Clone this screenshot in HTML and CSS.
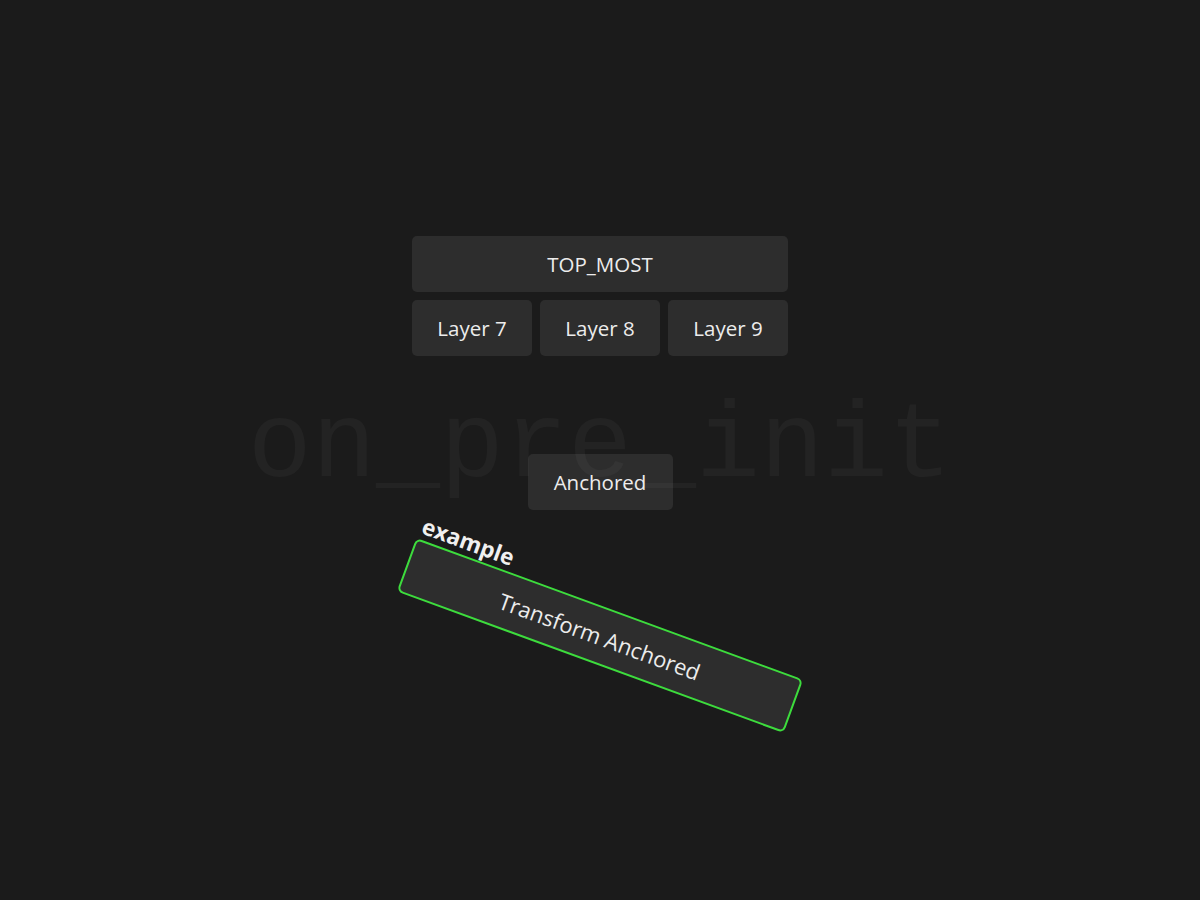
FILE: index.html
```html
<!DOCTYPE html>
<html>
<head>
<meta charset="utf-8">
<title>Layers</title>
<link rel="stylesheet" href="styles.css">
</head>
<body>
<main class="stage">
  <section class="layers">
    <button class="btn wide">TOP_MOST</button>
    <div class="row">
      <button class="btn">Layer 7</button>
      <button class="btn">Layer 8</button>
      <button class="btn">Layer 9</button>
    </div>
  </section>
  <section class="anchor-zone">
    <button class="btn anchored">Anchored</button>
    <div class="watermark">on_pre_init</div>
  </section>
  <section class="transform-zone">
    <div class="tbox">
      <span class="tag">example</span>
      <span class="tlabel">Transform Anchored</span>
    </div>
  </section>
</main>
</body>
</html>
```
FILE: styles.css
```css
html, body {
  margin: 0;
  padding: 0;
  background: #1b1b1b;
  height: 100%;
}
body {
  font-family: "Open Sans", "Noto Sans", sans-serif;
  color: #e6e6e6;
  overflow: hidden;
}
.stage {
  display: flex;
  flex-direction: column;
  align-items: center;
  padding-top: 236px;
}
.btn {
  font-family: "Open Sans", "Noto Sans", sans-serif;
  font-size: 20.5px;
  color: #ececec;
  background: #2d2d2d;
  border: none;
  border-radius: 5px;
  height: 56px;
  padding: 0;
  margin: 0;
  display: flex;
  align-items: center;
  justify-content: center;
}
.layers {
  width: 376px;
  display: flex;
  flex-direction: column;
  gap: 8px;
}
.row {
  display: grid;
  grid-template-columns: repeat(3, 1fr);
  gap: 8px;
}
.anchor-zone {
  position: relative;
  margin-top: 98px;
  display: flex;
  justify-content: center;
}
.anchored {
  width: 145px;
}
.watermark {
  position: absolute;
  left: 50%;
  top: -59px;
  transform: translateX(-50%);
  font-family: "Liberation Mono", monospace;
  font-size: 106.7px;
  line-height: 1;
  white-space: nowrap;
  color: rgba(255, 255, 255, 0.035);
  pointer-events: none;
}
.transform-zone {
  margin-top: 97px;
  display: flex;
  justify-content: center;
}
.tbox {
  position: relative;
  box-sizing: border-box;
  width: 412px;
  height: 57px;
  border: 2px solid #3ddc3d;
  border-radius: 6px;
  background: #2d2d2d;
  display: flex;
  align-items: center;
  justify-content: center;
  transform: rotate(20.1deg);
  font-size: 22px;
  color: #ececec;
}
.tag {
  position: absolute;
  left: 0;
  bottom: 100%;
  margin-bottom: 3px;
  font-weight: 700;
  font-size: 22.5px;
  line-height: 26px;
  color: #f0f0f0;
}
```
